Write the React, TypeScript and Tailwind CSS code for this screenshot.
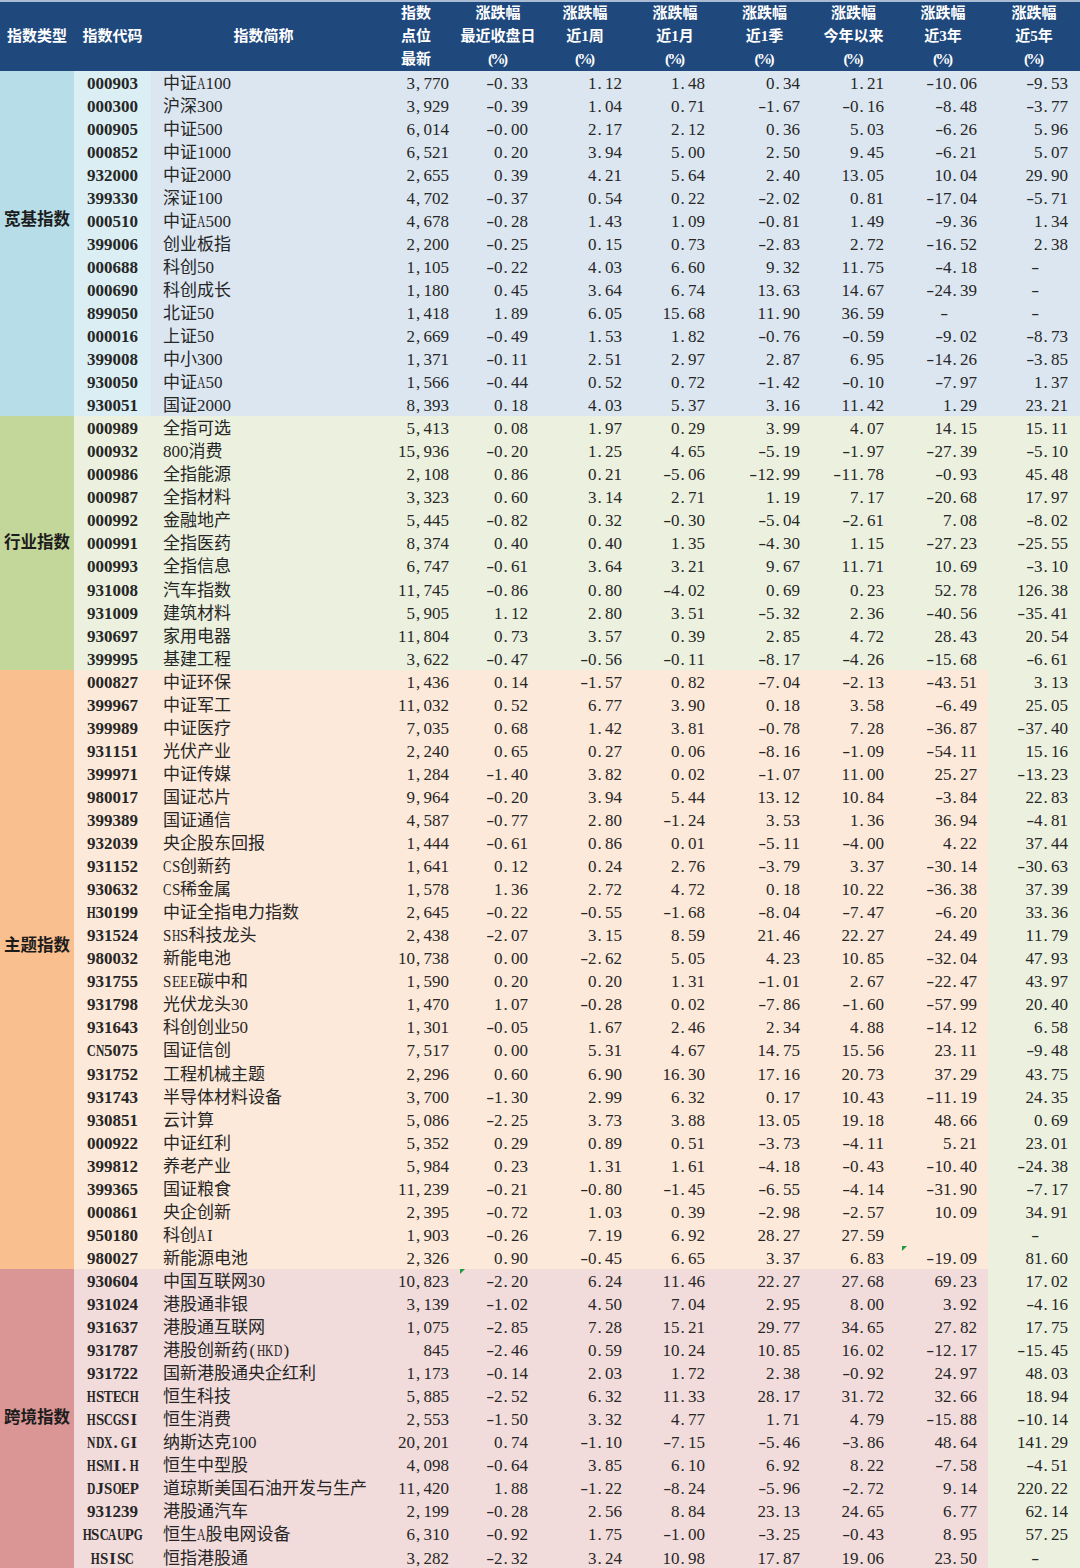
import React from 'react';

type Row = { code: string; name: string; vals: string[] };

type Section = {
    label: string;
    catBg: string;
    rowBg: string;
    codeBg: string;
    lastBg: string;
    labelPad: string;
    lines: string;
};

// columns: type | code | name | 点位 | 最近 | 1周 | 1月 | 1季 | 今年 | 3年 | 5年
const headers: string[][] = [
    ['指数类型'],
    ['指数代码'],
    ['指数简称'],
    ['指数', '点位', '最新'],
    ['涨跌幅', '最近收盘日', '(%)'],
    ['涨跌幅', '近1周', '(%)'],
    ['涨跌幅', '近1月', '(%)'],
    ['涨跌幅', '近1季', '(%)'],
    ['涨跌幅', '今年以来', '(%)'],
    ['涨跌幅', '近3年', '(%)'],
    ['涨跌幅', '近5年', '(%)'],
];

const valPad = ['pr-[7px]', 'pr-[12px]', 'pr-[8px]', 'pr-[15px]', 'pr-[9px]', 'pr-[14px]', 'pr-[11px]', 'pr-[12px]'];

// excel's little green corner markers
const marks = new Set(['930604:1', '980027:6']);

const sections: Section[] = [
    {
        label: '宽基指数',
        catBg: 'bg-[#b7dee8]',
        rowBg: 'bg-[#dce6f1]',
        codeBg: 'bg-[#daeef3]',
        lastBg: '',
        labelPad: 'pb-[46px]',
        lines: `000903 中证A100 3,770 -0.33 1.12 1.48 0.34 1.21 -10.06 -9.53
000300 沪深300 3,929 -0.39 1.04 0.71 -1.67 -0.16 -8.48 -3.77
000905 中证500 6,014 -0.00 2.17 2.12 0.36 5.03 -6.26 5.96
000852 中证1000 6,521 0.20 3.94 5.00 2.50 9.45 -6.21 5.07
932000 中证2000 2,655 0.39 4.21 5.64 2.40 13.05 10.04 29.90
399330 深证100 4,702 -0.37 0.54 0.22 -2.02 0.81 -17.04 -5.71
000510 中证A500 4,678 -0.28 1.43 1.09 -0.81 1.49 -9.36 1.34
399006 创业板指 2,200 -0.25 0.15 0.73 -2.83 2.72 -16.52 2.38
000688 科创50 1,105 -0.22 4.03 6.60 9.32 11.75 -4.18 -
000690 科创成长 1,180 0.45 3.64 6.74 13.63 14.67 -24.39 -
899050 北证50 1,418 1.89 6.05 15.68 11.90 36.59 - -
000016 上证50 2,669 -0.49 1.53 1.82 -0.76 -0.59 -9.02 -8.73
399008 中小300 1,371 -0.11 2.51 2.97 2.87 6.95 -14.26 -3.85
930050 中证A50 1,566 -0.44 0.52 0.72 -1.42 -0.10 -7.97 1.37
930051 国证2000 8,393 0.18 4.03 5.37 3.16 11.42 1.29 23.21`,
    },
    {
        label: '行业指数',
        catBg: 'bg-[#c4d79b]',
        rowBg: 'bg-[#ebf1de]',
        codeBg: '',
        lastBg: '',
        labelPad: '',
        lines: `000989 全指可选 5,413 0.08 1.97 0.29 3.99 4.07 14.15 15.11
000932 800消费 15,936 -0.20 1.25 4.65 -5.19 -1.97 -27.39 -5.10
000986 全指能源 2,108 0.86 0.21 -5.06 -12.99 -11.78 -0.93 45.48
000987 全指材料 3,323 0.60 3.14 2.71 1.19 7.17 -20.68 17.97
000992 金融地产 5,445 -0.82 0.32 -0.30 -5.04 -2.61 7.08 -8.02
000991 全指医药 8,374 0.40 0.40 1.35 -4.30 1.15 -27.23 -25.55
000993 全指信息 6,747 -0.61 3.64 3.21 9.67 11.71 10.69 -3.10
931008 汽车指数 11,745 -0.86 0.80 -4.02 0.69 0.23 52.78 126.38
931009 建筑材料 5,905 1.12 2.80 3.51 -5.32 2.36 -40.56 -35.41
930697 家用电器 11,804 0.73 3.57 0.39 2.85 4.72 28.43 20.54
399995 基建工程 3,622 -0.47 -0.56 -0.11 -8.17 -4.26 -15.68 -6.61`,
    },
    {
        label: '主题指数',
        catBg: 'bg-[#fabf8f]',
        rowBg: 'bg-[#fde9d9]',
        codeBg: '',
        lastBg: 'bg-[#ebf1de]',
        labelPad: 'pb-[46px]',
        lines: `000827 中证环保 1,436 0.14 -1.57 0.82 -7.04 -2.13 -43.51 3.13
399967 中证军工 11,032 0.52 6.77 3.90 0.18 3.58 -6.49 25.05
399989 中证医疗 7,035 0.68 1.42 3.81 -0.78 7.28 -36.87 -37.40
931151 光伏产业 2,240 0.65 0.27 0.06 -8.16 -1.09 -54.11 15.16
399971 中证传媒 1,284 -1.40 3.82 0.02 -1.07 11.00 25.27 -13.23
980017 国证芯片 9,964 -0.20 3.94 5.44 13.12 10.84 -3.84 22.83
399389 国证通信 4,587 -0.77 2.80 -1.24 3.53 1.36 36.94 -4.81
932039 央企股东回报 1,444 -0.61 0.86 0.01 -5.11 -4.00 4.22 37.44
931152 CS创新药 1,641 0.12 0.24 2.76 -3.79 3.37 -30.14 -30.63
930632 CS稀金属 1,578 1.36 2.72 4.72 0.18 10.22 -36.38 37.39
H30199 中证全指电力指数 2,645 -0.22 -0.55 -1.68 -8.04 -7.47 -6.20 33.36
931524 SHS科技龙头 2,438 -2.07 3.15 8.59 21.46 22.27 24.49 11.79
980032 新能电池 10,738 0.00 -2.62 5.05 4.23 10.85 -32.04 47.93
931755 SEEE碳中和 1,590 0.20 0.20 1.31 -1.01 2.67 -22.47 43.97
931798 光伏龙头30 1,470 1.07 -0.28 0.02 -7.86 -1.60 -57.99 20.40
931643 科创创业50 1,301 -0.05 1.67 2.46 2.34 4.88 -14.12 6.58
CN5075 国证信创 7,517 0.00 5.31 4.67 14.75 15.56 23.11 -9.48
931752 工程机械主题 2,296 0.60 6.90 16.30 17.16 20.73 37.29 43.75
931743 半导体材料设备 3,700 -1.30 2.99 6.32 0.17 10.43 -11.19 24.35
930851 云计算 5,086 -2.25 3.73 3.88 13.05 19.18 48.66 0.69
000922 中证红利 5,352 0.29 0.89 0.51 -3.73 -4.11 5.21 23.01
399812 养老产业 5,984 0.23 1.31 1.61 -4.18 -0.43 -10.40 -24.38
399365 国证粮食 11,239 -0.21 -0.80 -1.45 -6.55 -4.14 -31.90 -7.17
000861 央企创新 2,395 -0.72 1.03 0.39 -2.98 -2.57 10.09 34.91
950180 科创AI 1,903 -0.26 7.19 6.92 28.27 27.59 _ -
980027 新能源电池 2,326 0.90 -0.45 6.65 3.37 6.83 -19.09 81.60`,
    },
    {
        label: '跨境指数',
        catBg: 'bg-[#da9694]',
        rowBg: 'bg-[#f2dcdb]',
        codeBg: '',
        lastBg: 'bg-[#ebf1de]',
        labelPad: '',
        lines: `930604 中国互联网30 10,823 -2.20 6.24 11.46 22.27 27.68 69.23 17.02
931024 港股通非银 3,139 -1.02 4.50 7.04 2.95 8.00 3.92 -4.16
931637 港股通互联网 1,075 -2.85 7.28 15.21 29.77 34.65 27.82 17.75
931787 港股创新药(HKD) 845 -2.46 0.59 10.24 10.85 16.02 -12.17 -15.45
931722 国新港股通央企红利 1,173 -0.14 2.03 1.72 2.38 -0.92 24.97 48.03
HSTECH 恒生科技 5,885 -2.52 6.32 11.33 28.17 31.72 32.66 18.94
HSCGSI 恒生消费 2,553 -1.50 3.32 4.77 1.71 4.79 -15.88 -10.14
NDX.GI 纳斯达克100 20,201 0.74 -1.10 -7.15 -5.46 -3.86 48.64 141.29
HSMI.H 恒生中型股 4,098 -0.64 3.85 6.10 6.92 8.22 -7.58 -4.51
DJSOEP 道琼斯美国石油开发与生产 11,420 1.88 -1.22 -8.24 -5.96 -2.72 9.14 220.22
931239 港股通汽车 2,199 -0.28 2.56 8.84 23.13 24.65 6.77 62.14
HSCAUPG 恒生A股电网设备 6,310 -0.92 1.75 -1.00 -3.25 -0.43 8.95 57.25
HSISC 恒指港股通 3,282 -2.32 3.24 10.98 17.87 19.06 23.50 -`,
    },
];

const parse = (lines: string): Row[] =>
    lines.split('\n').map(line => {
        const parts = line.trim().split(' ');
        return { code: parts[0], name: parts[1], vals: parts.slice(2) };
    });

// song-style half-width latin: every ascii char takes half an em,
// wide capitals get squeezed to fit
const charClass = (c: string) => {
    const box = 'inline-flex w-[0.5em] justify-center';
    if (c === '.' || c === ',') return 'inline-block w-[0.5em] text-left pl-[1px]';
    if (c === '-') return `${box} scale-x-[1.4]`;
    if ('MW'.includes(c)) return `${box} scale-x-[0.56]`;
    if ('ADGHKNOQUVXY'.includes(c)) return `${box} scale-x-[0.68]`;
    if ('BCR'.includes(c)) return `${box} scale-x-[0.74]`;
    if ('ELTZ'.includes(c)) return `${box} scale-x-[0.8]`;
    if ('FPS'.includes(c)) return `${box} scale-x-[0.88]`;
    return box;
};

const Half = ({ text }: { text: string }) => (
    <>
        {Array.from(text).map((c, i) =>
            c.charCodeAt(0) < 128 ? (
                <span key={i} className={charClass(c)}>
                    {c}
                </span>
            ) : (
                <React.Fragment key={i}>{c}</React.Fragment>
            )
        )}
    </>
);

const rowGrid = 'grid grid-cols-[77px_225px_80px_84px_90px_90px_89px_89px_90px_92px] h-[23.05px]';

const ValueCell = ({ v, i, last, lastBg, marked }: { v: string; i: number; last: boolean; lastBg: string; marked: boolean }) => {
    const dash = v === '-';
    return (
        <div className={`relative flex items-center whitespace-nowrap ${dash ? 'justify-center pl-[2px]' : `justify-end ${valPad[i]}`} ${last ? lastBg : ''}`}>
            {marked && (
                <span className="absolute left-[4px] top-0 w-0 h-0 border-t-[5px] border-r-[5px] border-t-[#1f9a3c] border-r-transparent" />
            )}
            {v === '_' ? '' : <Half text={v} />}
        </div>
    );
};

const SectionBlock = ({ section }: { section: Section }) => {
    const rows = parse(section.lines);
    return (
        <div className="flex">
            <div className={`w-[74px] shrink-0 flex items-center justify-center ${section.catBg} ${section.labelPad}`}>
                <span className="text-[16.5px] font-bold text-[#1c1c1c] whitespace-nowrap">{section.label}</span>
            </div>
            <div className={`flex-1 flex flex-col ${section.rowBg}`}>
                {rows.map(row => (
                    <div key={row.code} className={rowGrid}>
                        <div className={`flex items-center justify-center font-bold whitespace-nowrap ${section.codeBg}`}>
                            <Half text={row.code} />
                        </div>
                        <div className="flex items-center pl-[12px] whitespace-nowrap">
                            <Half text={row.name} />
                        </div>
                        {row.vals.map((v, i) => (
                            <ValueCell
                                key={i}
                                v={v}
                                i={i}
                                last={i === row.vals.length - 1}
                                lastBg={section.lastBg}
                                marked={marks.has(`${row.code}:${i}`)}
                            />
                        ))}
                    </div>
                ))}
            </div>
        </div>
    );
};

export default function App() {
    return (
        <div className="w-[1080px] h-[1568px] overflow-hidden bg-white font-['Liberation_Serif','Noto_Sans_CJK_SC',serif] text-[17px] text-[#262626]">
            <div className="grid grid-cols-[74px_77px_225px_80px_84px_90px_90px_89px_89px_90px_92px] h-[70.5px] bg-[#1f497d] border-t-2 border-[#a9bcd4] text-white text-[15px] font-bold">
                {headers.map((lines, idx) => (
                    <div key={idx} className="flex flex-col items-center justify-center leading-[23px] whitespace-nowrap">
                        {lines.map(l => (
                            <span key={l}>
                                <Half text={l} />
                            </span>
                        ))}
                    </div>
                ))}
            </div>
            {sections.map(s => (
                <SectionBlock key={s.label} section={s} />
            ))}
        </div>
    );
}
